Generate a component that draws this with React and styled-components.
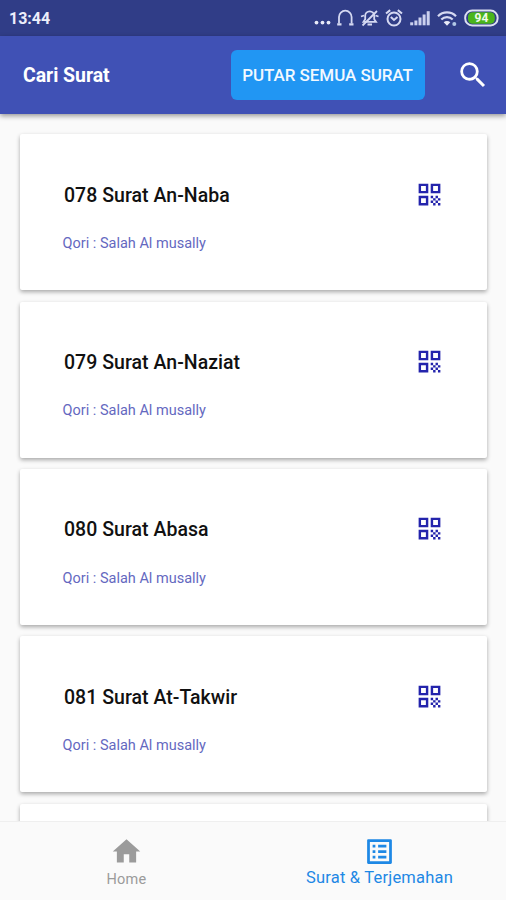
import React from "react";
import styled, { createGlobalStyle } from "styled-components";
import { MdHome, MdOutlineListAlt, MdQrCode, MdSearch } from "react-icons/md";

const surats = [
	{ no: "078", name: "An-Naba" },
	{ no: "079", name: "An-Naziat" },
	{ no: "080", name: "Abasa" },
	{ no: "081", name: "At-Takwir" },
];

function StatusIcons() {
	return (
		<StatusSvg width="190" height="36" viewBox="0 0 190 36">
			{/* more dots */}
			<g fill="#e8eaf8">
				<circle cx="6.5" cy="22.6" r="1.9" />
				<circle cx="12.5" cy="22.6" r="1.9" />
				<circle cx="18.5" cy="22.6" r="1.9" />
			</g>
			{/* headphones */}
			<g fill="none" stroke="#d5d9f2">
				<path d="M29 23.500V17a6.300 6.300 0 0 1 12.600 0v6.500" strokeWidth="1.8" />
				<path d="M27.200 24.300h4.300M39.200 24.300h4.300" strokeWidth="2.200" />
			</g>
			{/* muted bell */}
			<g fill="none" stroke="#d5d9f2" strokeWidth="1.8">
				<path d="M53.500 21.800h12.500l-1.800-2.500v-3.500a4.500 4.500 0 0 0-9 0v3.500zM57.500 24.500h4.500M51 16.500l3-1M65.500 15.500l3 1" />
				<path d="M52.500 25.500L67 11" />
			</g>
			{/* alarm */}
			<g fill="none" stroke="#d5d9f2" strokeWidth="2">
				<circle cx="84" cy="19" r="6.500" />
				<path d="M80.800 17l3.200 3 3.500-3M76 13.500l4.200-3.400M92 13.500l-4.200-3.400" />
			</g>
			{/* signal */}
			<g fill="#cbd0ee">
				<rect x="100.200" y="22.300" width="3" height="3" />
				<rect x="104.400" y="20.500" width="3" height="4.800" />
				<rect x="108.500" y="17.500" width="3" height="7.800" />
				<rect x="112.600" y="14.500" width="3" height="10.800" />
				<rect x="116.700" y="11.200" width="3" height="14.100" />
			</g>
			{/* wifi */}
			<g fill="none" stroke="#d5d9f2" strokeWidth="2.200">
				<path d="M128 16.300a12.500 12.500 0 0 1 18 0" />
				<path d="M131.300 19.500a8 8 0 0 1 11.400 0" />
			</g>
			<path d="M133.700 22.300a4.700 4.700 0 0 1 6.600 0l-3.300 3.500z" fill="#e8eaf8" />
			<circle cx="144.300" cy="24" r="2" fill="#b2c8e6" />
			{/* battery */}
			<rect x="155.200" y="10.600" width="32.400" height="14.800" rx="7" fill="#2f3d87" stroke="#dcdff2" strokeWidth="2" />
			<rect x="158" y="12.300" width="26.800" height="11.400" rx="4.500" fill="#4ab51c" />
			<text x="171.400" y="22.300" textAnchor="middle" fontSize="12" fontWeight="700" fill="#f1fbea">
				94
			</text>
		</StatusSvg>
	);
}

function SuratCard({ no, name }) {
	return (
		<Card>
			<CardHead>
				<CardTitle>
					{no} Surat {name}
				</CardTitle>
				<MdQrCode size={29} color="#2424ac" />
			</CardHead>
			<Qori>Qori : Salah Al musally</Qori>
		</Card>
	);
}

export default function App() {
	return (
		<>
			<GlobalStyle />
			<Screen>
				<StatusBar>
					<Clock>13:44</Clock>
					<StatusIcons />
				</StatusBar>
				<AppBar>
					<BarTitle>Cari Surat</BarTitle>
					<PlayBtn>PUTAR SEMUA SURAT</PlayBtn>
					<MdSearch size={34} />
				</AppBar>
				<List>
					{surats.map((s) => (
						<SuratCard key={s.no} no={s.no} name={s.name} />
					))}
					{/* next card peeks out above the bottom nav */}
					<Card />
				</List>
				<BottomNav>
					<NavItem>
						<MdHome size={33} />
						<NavLabel>Home</NavLabel>
					</NavItem>
					<NavItem $active>
						<MdOutlineListAlt size={33} />
						<NavLabel $active>Surat &amp; Terjemahan</NavLabel>
					</NavItem>
				</BottomNav>
			</Screen>
		</>
	);
}

const GlobalStyle = createGlobalStyle`
	* {
		box-sizing: border-box;
	}
	body {
		margin: 0;
		font-family: Roboto, "Noto Sans", sans-serif;
	}
`;

const Screen = styled.div`
	display: flex;
	flex-direction: column;
	width: 506px;
	height: 900px;
	overflow: hidden;
	background: #fafafa;
`;

const StatusBar = styled.div`
	display: flex;
	flex: none;
	justify-content: space-between;
	align-items: center;
	height: 36px;
	padding: 0 6px 0 9px;
	background: #303d87;
	color: #eceefb;
`;

const Clock = styled.div`
	font-size: 16px;
	font-weight: 700;
	line-height: 36px;
	padding-top: 2px;
`;

const StatusSvg = styled.svg`
	display: block;
`;

const AppBar = styled.header`
	display: flex;
	flex: none;
	align-items: center;
	height: 78px;
	padding: 0 16px 0 23px;
	background: #4051b5;
	color: #fff;
	box-shadow: 0 2px 5px rgba(0, 0, 0, 0.4);
	z-index: 1;
`;

const BarTitle = styled.h1`
	flex: 1;
	margin: 0;
	font-size: 19.5px;
	font-weight: 700;
	letter-spacing: -0.05px;
`;

const PlayBtn = styled.button`
	width: 194px;
	height: 50px;
	margin-right: 31px;
	padding: 0 1px 0 0;
	border: 0;
	border-radius: 6px;
	background: #2196f3;
	color: #f3f9ff;
	font-family: inherit;
	font-size: 17px;
	font-weight: 500;
	letter-spacing: -0.06px;
	white-space: nowrap;
`;

const List = styled.main`
	display: flex;
	flex: 1;
	flex-direction: column;
	gap: 11.3px;
	min-height: 0;
	padding: 20.4px 19px 0 20px;
	overflow: hidden;
`;

const Card = styled.article`
	flex: none;
	height: 156px;
	padding: 45px 43px 0 44px;
	border-radius: 2px;
	background: #fff;
	box-shadow: 0 2px 4px rgba(0, 0, 0, 0.33);
`;

const CardHead = styled.div`
	display: flex;
	justify-content: space-between;
	align-items: center;
	height: 30px;
`;

const CardTitle = styled.h2`
	margin: 0;
	padding-top: 2px;
	color: #111;
	font-size: 19.5px;
	font-weight: 500;
	letter-spacing: 0.03px;
`;

const Qori = styled.p`
	margin: 24.6px 0 0 -1.5px;
	color: #6468bf;
	font-size: 14.5px;
	line-height: 20px;
`;

const BottomNav = styled.nav`
	display: flex;
	flex: none;
	height: 79px;
	border-top: 1px solid #efefef;
	background: #fafafa;
	z-index: 1;
`;

const NavItem = styled.div`
	display: flex;
	flex: 1;
	flex-direction: column;
	align-items: center;
	padding-top: 13px;
	color: ${(props) => (props.$active ? "#1e88e5" : "#9b9b9b")};
`;

const NavLabel = styled.span`
	margin-top: ${(props) => (props.$active ? "0" : "2px")};
	font-size: ${(props) => (props.$active ? "16.5px" : "14.5px")};
	line-height: 20px;
	letter-spacing: 0.2px;
`;
